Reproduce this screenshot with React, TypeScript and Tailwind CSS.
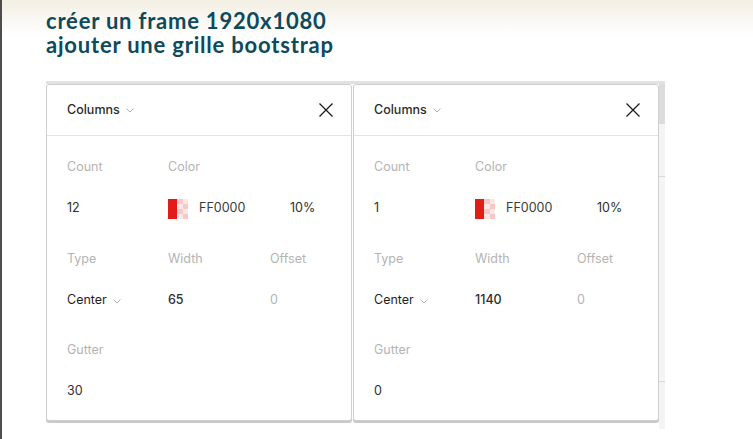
import React from 'react'

const Chevron: React.FC = () => (
  <svg width="8" height="5" viewBox="0 0 8 5" className="ml-[6px] mt-[1px]">
    <path d="M0.5 0.5 L4 4 L7.5 0.5" fill="none" stroke="#b0b0b0" strokeWidth="1" />
  </svg>
)

const Close: React.FC = () => (
  <svg width="16" height="16" viewBox="0 0 16 16">
    <path d="M1.5 1.5 L14.5 14.5 M14.5 1.5 L1.5 14.5" fill="none" stroke="#1c1c1c" strokeWidth="1.3" />
  </svg>
)

const Swatch: React.FC = () => (
  <div className="flex w-[20px] h-[20px]">
    <div className="w-[9px] h-full bg-[#e21d17]" />
    <div className="w-[11px] h-full grid grid-cols-2 grid-rows-4">
      {[0, 1, 2, 3, 4, 5, 6, 7].map((i) => (
        <div key={i} className={(Math.floor(i / 2) + i) % 2 === 0 ? 'bg-[#f5c9c7]' : 'bg-[#fbe7e6]'} />
      ))}
    </div>
  </div>
)

const Row: React.FC<{ children: React.ReactNode; className?: string }> = ({ children, className }) => (
  <div className={'grid grid-cols-[101px_102px_1fr] h-[41px] items-center ' + (className ?? '')}>{children}</div>
)

const Label: React.FC<{ text: string }> = ({ text }) => <span className="text-[#b4b4b4]">{text}</span>

const Panel: React.FC<{ count: string; width: string; gutter: string }> = ({ count, width, gutter }) => {
  return (
    <div className="w-[306px] h-[337px] bg-white border border-[#cfcfcf] rounded-[3px] shadow-[0_2px_0_#c9c9c9] flex flex-col">
      <div className="h-[51px] border-b border-[#e3e3e3] flex items-center justify-between pl-[20px] pr-[17px]">
        <div className="flex items-center text-[12.5px] font-medium text-[#2a2a2a]">
          Columns
          <Chevron />
        </div>
        <Close />
      </div>
      <div className="pt-[11px] pl-[20px] text-[12.5px] text-[#2e2e2e]">
        <Row>
          <Label text="Count" />
          <Label text="Color" />
          <span />
        </Row>
        <Row>
          <span>{count}</span>
          <div className="flex items-center col-span-2">
            <Swatch />
            <span className="ml-[11px] w-[91px] text-[#3a3a3a]">FF0000</span>
            <span>10%</span>
          </div>
        </Row>
        <Row className="mt-[10px]">
          <Label text="Type" />
          <Label text="Width" />
          <Label text="Offset" />
        </Row>
        <Row>
          <div className="flex items-center text-[#1f1f1f]">
            Center
            <Chevron />
          </div>
          <span className="font-medium">{width}</span>
          <span className="text-[#b4b4b4]">0</span>
        </Row>
        <Row className="mt-[9px]">
          <Label text="Gutter" />
        </Row>
        <Row>
          <span>{gutter}</span>
        </Row>
      </div>
    </div>
  )
}

const App: React.FC = () => {
  return (
    <div className="w-[753px] h-[439px] overflow-hidden border-l-2 border-[#4d4d4d] bg-[linear-gradient(to_bottom,#f3efe4,#ffffff_36px)] font-['Inter',sans-serif]">
      <h1 className="pl-[44px] pt-[9px] font-['Lato',sans-serif] font-bold text-[22px] leading-[24px] tracking-[0.8px] text-[#0c4a5c]">
        créer un frame 1920x1080
        <br />
        ajouter une grille bootstrap
      </h1>
      <div className="ml-[44px] mt-[24px] w-[619px] border-t-[3px] border-[#e2e2e2]">
        <div className="flex">
          <Panel count="12" width="65" gutter="30" />
          <div className="ml-[1px]">
            <Panel count="1" width="1140" gutter="0" />
          </div>
          <div className="flex-1 h-[345px] bg-[#f4f4f4] flex flex-col">
            <div className="h-[40px] bg-[#dcdcdc]" />
            <div className="h-[52px]" />
            <div className="h-px bg-[#dadada]" />
            <div className="h-[204px]" />
            <div className="h-px bg-[#dadada]" />
          </div>
        </div>
      </div>
    </div>
  )
}

export default App
